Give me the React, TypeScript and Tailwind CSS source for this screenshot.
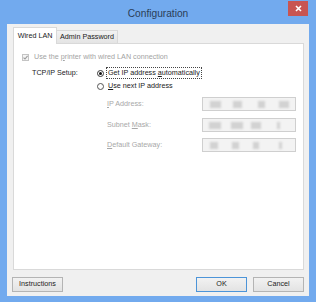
import React from "react";

const font = "font-['Liberation_Sans',Arial,sans-serif]";

// blurred address placeholder blocks (the reference hides the numbers)
function AddressBox({ blocks }: { blocks: number[][] }) {
  return (
    <div className="w-[94px] h-[14px] border border-[#cfcfcf] bg-[#f3f3f3] flex items-center px-[5px]">
      {blocks.map(([gap, w], i) => (
        <div
          key={i}
          style={{ marginLeft: gap, width: w }}
          className="h-[7px] bg-[#d2d2d2] blur-[1px]"
        />
      ))}
    </div>
  );
}

function Btn({ label, primary }: { label: string; primary?: boolean }) {
  return (
    <div
      className={`h-[15px] w-[51px] flex items-center justify-center border bg-gradient-to-b from-[#f2f2f2] to-[#e3e3e3] text-[7.2px] text-[#222] ${
        primary ? "border-[#4c94d8]" : "border-[#b4b4b4]"
      }`}
    >
      {label}
    </div>
  );
}

export default function App() {
  return (
    <div className={`w-[316px] h-[302px] bg-[#72aaee] flex flex-col ${font}`}>
      {/* Title bar */}
      <div className="h-[24px] flex items-start relative">
        <div className="flex-1 text-center text-[10.2px] text-[#2a3d58] pt-[6px]">
          Configuration
        </div>
        <div className="absolute right-[8px] top-[1px] w-[20px] h-[15px] bg-[#c85552] flex items-center justify-center">
          <svg width="7" height="7" viewBox="0 0 7 7">
            <path d="M1 1L6 6M6 1L1 6" stroke="white" strokeWidth="1.6" />
          </svg>
        </div>
      </div>

      {/* Client area */}
      <div className="flex-1 mx-[7px] mb-[6px] bg-[#f0f0f0] flex flex-col">
        {/* Tabs */}
        <div className="flex items-end pl-[6px] pr-[5px] pt-[3px] text-[7.2px] text-[#1a1a1a]">
          <div className="relative z-10 h-[17px] w-[44px] -mb-[1px] bg-white border border-b-0 border-[#d9d9d9] flex items-center justify-center">
            Wired LAN
          </div>
          <div className="h-[13px] w-[61px] bg-gradient-to-b from-[#f2f2f2] to-[#e4e4e4] border border-l-0 border-b-0 border-[#d9d9d9] flex items-center justify-center">
            Admin Password
          </div>
        </div>

        {/* Panel */}
        <div className="mx-[5px] ml-[6px] h-[227px] bg-white border border-[#d9d9d9] pl-[8px] pt-[7px] text-[7.2px]">
          <div className="h-[12px] flex items-center text-[#a3a3a3]">
            <div className="w-[7px] h-[7px] border border-[#c4c4c4] bg-[#f4f4f4] flex items-center justify-center">
              <svg width="5" height="5" viewBox="0 0 5 5">
                <path d="M0.5 2.6L2 4L4.6 0.8" stroke="#9a9a9a" strokeWidth="1.1" fill="none" />
              </svg>
            </div>
            <span className="ml-[5px]">
              Use the <u>p</u>rinter with wired LAN connection
            </span>
          </div>

          <div className="h-[12px] mt-[4px] flex items-center text-[#1a1a1a]">
            <div className="ml-[10px] w-[65px]">TCP/IP Setup:</div>
            <div className="w-[7px] h-[7px] rounded-full border border-[#333] flex items-center justify-center">
              <div className="w-[3px] h-[3px] rounded-full bg-[#111]" />
            </div>
            <span className="ml-[2px] border border-dotted border-[#444] px-[1px] leading-[10px]">
              Get IP address <u>a</u>utomatically
            </span>
          </div>

          <div className="h-[12px] mt-[1px] flex items-center text-[#1a1a1a]">
            <div className="ml-[10px] w-[65px]" />
            <div className="w-[7px] h-[7px] rounded-full border border-[#555]" />
            <span className="ml-[4px]">
              <u>U</u>se next IP address
            </span>
          </div>

          <div className="h-[14px] mt-[5px] flex items-center text-[#a8a8a8]">
            <div className="ml-[85px] w-[95px]">
              <u>I</u>P Address:
            </div>
            <AddressBox blocks={[[2, 11], [12, 9], [16, 7], [14, 10]]} />
          </div>
          <div className="h-[14px] mt-[7px] flex items-center text-[#a8a8a8]">
            <div className="ml-[85px] w-[95px]">
              Subnet <u>M</u>ask:
            </div>
            <AddressBox blocks={[[1, 12], [10, 12], [8, 10], [16, 3]]} />
          </div>
          <div className="h-[14px] mt-[6px] flex items-center text-[#a8a8a8]">
            <div className="ml-[85px] w-[95px]">
              <u>D</u>efault Gateway:
            </div>
            <AddressBox blocks={[[2, 8], [14, 7], [14, 6], [20, 3]]} />
          </div>
        </div>

        {/* Buttons */}
        <div className="flex items-center mt-[7px] pl-[5px] pr-[5px]">
          <Btn label="Instructions" />
          <div className="flex-1" />
          <Btn label="OK" primary />
          <div className="w-[6px]" />
          <Btn label="Cancel" />
        </div>
      </div>
    </div>
  );
}
